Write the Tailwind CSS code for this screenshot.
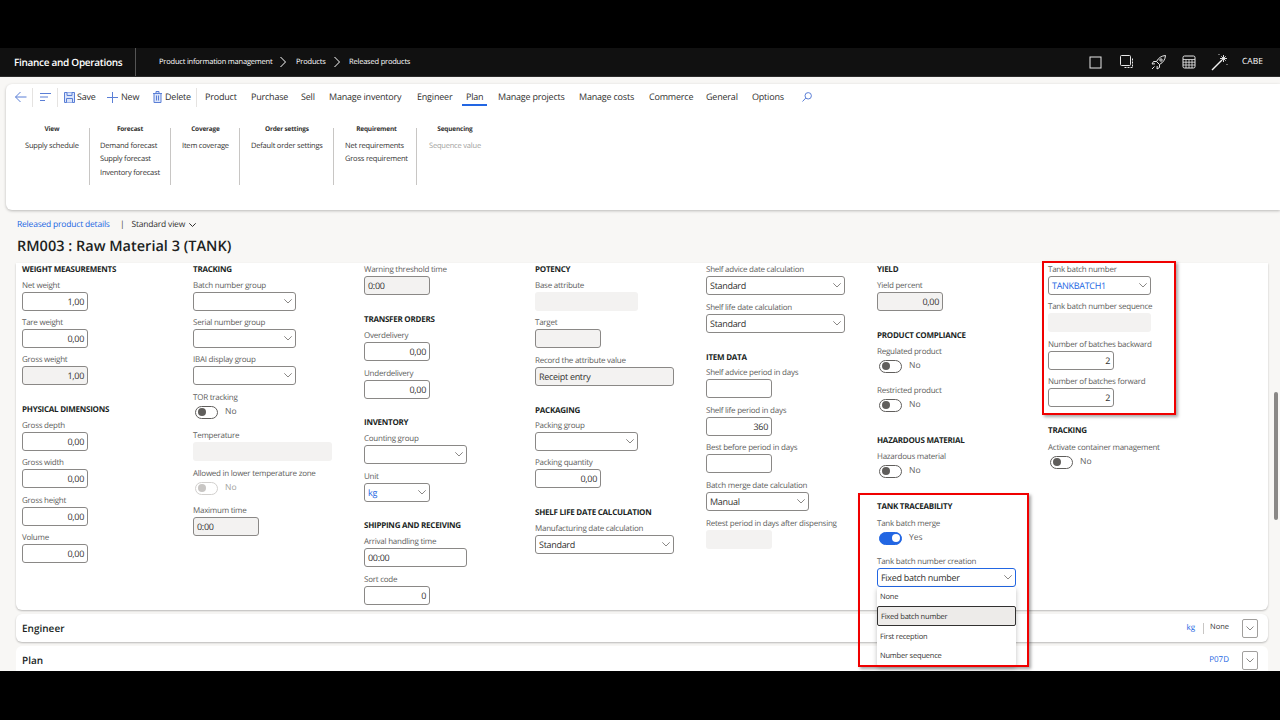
<!DOCTYPE html>
<html lang="en">
<head>
    <meta charset="UTF-8">
    <title>Released product details</title>
    <script src="https://cdn.jsdelivr.net/npm/@tailwindcss/browser@4"></script>
</head>
<body class="h-[720px] overflow-hidden bg-black font-['Open_Sans',sans-serif] [text-rendering:geometricPrecision]">
    <div class="h-[48px]"></div>
    <div class="relative h-[623px] overflow-hidden bg-[#f8f7f5]">
        <!-- top bar -->
        <header class="flex h-[29px] items-center bg-[#111111] text-white border-b border-[#2b2b2b]">
            <div class="w-[136px] h-full flex items-center pl-[14px] border-r border-[#555] text-[10px] font-semibold tracking-[-0.3px] whitespace-nowrap">Finance and Operations</div>
            <nav class="flex items-center pl-[23px] text-[7.5px] font-medium tracking-[-0.2px] whitespace-nowrap">
                <span class="w-[113px] pt-[2px]">Product information management</span>
                <svg class="mx-[8px] w-[6px] h-[12px]" viewBox="0 0 6 12" fill="none" stroke="white"><path d="M0.5 1l5 5-5 5"/></svg>
                <span class="w-[30px] ml-[2px] pt-[2px]">Products</span>
                <svg class="mx-[8px] w-[6px] h-[12px]" viewBox="0 0 6 12" fill="none" stroke="white"><path d="M0.5 1l5 5-5 5"/></svg>
                <span class="ml-[1px] pt-[2px]">Released products</span>
            </nav>
            <div class="ml-auto flex items-center pr-[17px]">
                <svg class="w-[13px] h-[13px]" viewBox="0 0 13 13" fill="none" stroke="#e8e8e8"><rect x="1" y="1" width="11" height="11"/></svg>
                <svg class="ml-[17px] w-[16px] h-[16px]" viewBox="0 0 16 16" fill="none" stroke="#e8e8e8"><rect x="1.5" y="1.5" width="10" height="10" rx="1"/><path d="M13.5 4.5v9h-9" stroke-dasharray="2 1"/></svg>
                <svg class="ml-[15px] w-[17px] h-[17px]" viewBox="0 0 17 17" fill="none" stroke="#e8e8e8"><path d="M15.5 1.5c-4 .3-7 2.300-9 6l3 3c3.700-2 5.700-5 6-9zM6.500 7.500h-3l-1.500 2.500 3-.2M9.500 10.500v3l-2.500 1.500.2-3M4.500 12.500l-2.500 2.500"/><circle cx="11" cy="6" r="1.200"/></svg>
                <svg class="ml-[15px] w-[14px] h-[14px]" viewBox="0 0 14 14" fill="none" stroke="#e8e8e8"><rect x="1" y="1" width="12" height="12" rx="1.500"/><path d="M1 4.500h12M1 7.200h12M1 10h12M4 4.500v8.500M7 4.500v8.500M10 4.500v8.500" stroke-width=".8"/></svg>
                <svg class="ml-[15px] w-[18px] h-[18px]" viewBox="0 0 18 18" fill="none" stroke="#f2f2f2"><path d="M1 17l10-10" stroke-width="1.400"/><path d="M12.500 2v7M9 5.500h7M10.300 3.300l4.400 4.400M14.700 3.300l-4.400 4.400" stroke-width=".9"/><path d="M16 11v1M8 1v1" stroke-width=".8"/></svg>
                <span class="ml-[13px] w-[21px] pt-[1px] text-[8.5px]">CABE</span>
            </div>
        </header>

        <!-- action pane -->
        <section class="mt-[7px] ml-[6px] h-[126px] bg-white rounded-l-[6px] shadow-[0_1px_3px_rgba(0,0,0,0.25)]">
            <div class="flex h-[26px] items-center text-[9px] tracking-[-0.2px] text-[#323130] whitespace-nowrap">
                <svg class="ml-[9px] w-[12px] h-[12px]" viewBox="0 0 12 12" fill="none" stroke="#5b7fd6"><path d="M11.500 6h-11M5.500 1l-5 5 5 5"/></svg>
                <span class="ml-[5px] h-[19px] border-l border-[#e5e3e1]"></span>
                <svg class="ml-[7px] w-[11px] h-[10px]" viewBox="0 0 11 10" fill="none" stroke="#5b7fd6"><path d="M0 1.500h11M0 5h8M0 8.500h5"/></svg>
                <span class="ml-[6px] h-[19px] border-l border-[#e5e3e1]"></span>
                <svg class="ml-[6px] w-[11px] h-[11px]" viewBox="0 0 11 11" fill="#dbe5fa" stroke="#5b7fd6"><path d="M.5.500h10v10H.5z"/><path d="M3 .500v3h5v-3M2.500 10.500v-4h6v4"/></svg>
                <span class="ml-[2px] w-[17px]">Save</span>
                <svg class="ml-[13px] w-[11px] h-[11px]" viewBox="0 0 11 11" fill="none" stroke="#5b7fd6"><path d="M5.500 0v11M0 5.500h11"/></svg>
                <span class="ml-[3px] w-[17px]">New</span>
                <svg class="ml-[15px] w-[9px] h-[12px]" viewBox="0 0 9 12" fill="#dbe5fa" stroke="#5b7fd6"><path d="M1 2.500h7v9H1zM0 2.500h9M3 2.500V.500h3v2M3.500 4.500v5M5.500 4.500v5"/></svg>
                <span class="ml-[3px] w-[26px]">Delete</span>
                <span class="ml-[5px] h-[19px] border-l border-[#e5e3e1]"></span>
                <span class="ml-[8px] w-[32px]">Product</span>
                <span class="ml-[14px] w-[36px]">Purchase</span>
                <span class="ml-[14px] w-[15px]">Sell</span>
                <span class="ml-[13px] w-[74px]">Manage inventory</span>
                <span class="ml-[14px] w-[36px]">Engineer</span>
                <span class="relative ml-[13px] w-[17px]">Plan<span class="absolute left-[-4px] right-[-4px] top-[14px] h-[2px] bg-[#2266e3]"></span></span>
                <span class="ml-[15px] w-[68px]">Manage projects</span>
                <span class="ml-[13px] w-[57px]">Manage costs</span>
                <span class="ml-[13px] w-[44px]">Commerce</span>
                <span class="ml-[13px] w-[32px]">General</span>
                <span class="ml-[14px] w-[32px]">Options</span>
                <svg class="ml-[18px] w-[10px] h-[10px]" viewBox="0 0 10 10" fill="none" stroke="#5b7fd6"><circle cx="6.200" cy="3.800" r="3.200"/><path d="M3.800 6L.5 9.500"/></svg>
            </div>
            <div class="flex mt-[18px] ml-[8px] h-[57px] text-[7.5px] tracking-[-0.2px] text-[#323130] whitespace-nowrap">
                <div class="w-[76px] pl-[11px] border-r border-[#c8c6c4]">
                    <div class="w-fit"><div class="h-[14px] leading-[1px] text-center font-bold text-[6.5px]">View</div><div class="h-[14px] leading-[8px]">Supply schedule</div></div>
                </div>
                <div class="w-[81px] pl-[10px] border-r border-[#c8c6c4]">
                    <div class="w-fit"><div class="h-[14px] leading-[1px] text-center font-bold text-[6.5px]">Forecast</div><div class="h-[14px] leading-[8px]">Demand forecast</div><div class="h-[14px] leading-[7px]">Supply forecast</div><div class="h-[14px] leading-[7px]">Inventory forecast</div></div>
                </div>
                <div class="w-[69px] pl-[11px] border-r border-[#c8c6c4]">
                    <div class="w-fit"><div class="h-[14px] leading-[1px] text-center font-bold text-[6.5px]">Coverage</div><div class="h-[14px] leading-[8px]">Item coverage</div></div>
                </div>
                <div class="w-[94px] pl-[11px] border-r border-[#c8c6c4]">
                    <div class="w-fit"><div class="h-[14px] leading-[1px] text-center font-bold text-[6.5px]">Order settings</div><div class="h-[14px] leading-[8px]">Default order settings</div></div>
                </div>
                <div class="w-[83px] pl-[11px] border-r border-[#c8c6c4]">
                    <div class="w-fit"><div class="h-[14px] leading-[1px] text-center font-bold text-[6.5px]">Requirement</div><div class="h-[14px] leading-[8px]">Net requirements</div><div class="h-[14px] leading-[7px]">Gross requirement</div></div>
                </div>
                <div class="w-[74px] pl-[12px]">
                    <div class="w-fit"><div class="h-[14px] leading-[1px] text-center font-bold text-[6.5px]">Sequencing</div><div class="h-[14px] leading-[8px] text-[#a19f9d]">Sequence value</div></div>
                </div>
            </div>
        </section>

        <!-- page title -->
        <div class="h-[53px] pl-[17px] pt-[9px]">
            <div class="flex items-center h-[12px] text-[8.5px] tracking-[-0.2px] text-[#323130] whitespace-nowrap">
                <span class="w-[95px] text-[#2266e3]">Released product details</span>
                <span class="ml-[8px] mr-[7px]">|</span>
                <span class="w-[54px]">Standard view</span>
                <svg class="ml-[4px] w-[7px] h-[4px]" viewBox="0 0 7 4" fill="none" stroke="#323130"><path d="M.3.3L3.500 3.500 6.700.3"/></svg>
            </div>
            <h1 class="mt-[6px] text-[14.500px] leading-[20px] font-semibold text-[#201f1e] whitespace-nowrap">RM003 : Raw Material 3 (TANK)</h1>
        </div>

        <!-- general fasttab, the top is scrolled away -->
        <section class="ml-[16px] w-[1252px] h-[347px] overflow-hidden bg-white rounded-b-[6px] shadow-[0_1px_2px_rgba(0,0,0,0.25)]">
            <div id="fields" class="grid grid-cols-[repeat(7,171px)] -mt-px pl-[6px]"></div>
        </section>

        <section class="mt-[4px] ml-[16px] w-[1252px] h-[28px] flex items-center pl-[6px] bg-white rounded-[6px] shadow-[0_1px_2px_rgba(0,0,0,0.25)]">
            <span class="text-[10px] font-semibold text-[#201f1e]">Engineer</span>
            <span class="ml-auto text-[8px] text-[#2266e3]">kg</span>
            <span class="ml-[8px] h-[11px] border-l border-[#c8c6c4]"></span>
            <span class="ml-[6px] text-[7.5px] text-[#323130]">None</span>
            <span class="ml-[13px] mr-[10px] w-[16px] h-[19px] flex items-center justify-center border border-[#a19f9d] rounded-[2px]"><svg class="w-[8px] h-[5px]" viewBox="0 0 8 5" fill="none" stroke="#8a8886"><path d="M.5.5L4 4 7.500.5"/></svg></span>
        </section>
        <section class="mt-[4px] ml-[16px] w-[1252px] h-[28px] flex items-center pl-[6px] bg-white rounded-t-[6px]">
            <span class="text-[10px] font-semibold text-[#201f1e]">Plan</span>
            <span class="ml-auto text-[8px] text-[#2266e3]">P07D</span>
            <span class="ml-[13px] mr-[10px] w-[16px] h-[19px] flex items-center justify-center border border-[#a19f9d] rounded-[2px]"><svg class="w-[8px] h-[5px]" viewBox="0 0 8 5" fill="none" stroke="#8a8886"><path d="M.5.5L4 4 7.500.5"/></svg></span>
        </section>

        <!-- scrollbar -->
        <div class="absolute left-[1274px] top-[344px] w-[4px] h-[128px] rounded-[2px] bg-[#8a8886]"></div>

        <!-- open dropdown -->
        <div class="absolute left-[877px] top-[539px] w-[139px] h-[79px] bg-white rounded-[2px] shadow-[0_2px_5px_rgba(0,0,0,0.25)] text-[7.500px] tracking-[-0.2px] text-[#323130]">
            <div class="h-[19px] pl-[3px] leading-[21px]">None</div>
            <div class="h-[20px] pl-[3px] leading-[20px] bg-[#edebe9] border border-[#323130] rounded-[2px]">Fixed batch number</div>
            <div class="h-[20px] pl-[3px] leading-[22px]">First reception</div>
            <div class="h-[19px] pl-[3px] leading-[21px]">Number sequence</div>
        </div>

        <!-- red callouts -->
        <div class="absolute left-[858px] top-[445px] w-[171px] h-[174px] border-2 border-[#f00000] shadow-[2px_2px_3px_rgba(0,0,0,0.35)]"></div>
        <div class="absolute left-[1042px] top-[213px] w-[134px] h-[154px] border-2 border-[#f00000] shadow-[2px_2px_3px_rgba(0,0,0,0.35)]"></div>
    </div>
    <div class="h-[49px]"></div>

    <script>
        const chevron = '<svg class="ml-auto shrink-0 w-[8px] h-[5px]" viewBox="0 0 8 5" fill="none" stroke="#8a8886"><path d="M.3.3L4 4 7.700.3"/></svg>';

        function head(text, mt) {
            return `<div class="h-[14px] leading-[16px] text-[8px] font-bold tracking-[-0.25px] text-[#201f1e] whitespace-nowrap ${mt}">${text}</div>`;
        }
        function label(text) {
            return `<div class="h-[14px] leading-[16px] text-[8px] tracking-[-0.25px] text-[#605e5c] whitespace-nowrap">${text}</div>`;
        }
        function num(text, value, mt) {
            return `<div class="${mt}">${label(text)}<div class="w-[66px] h-[19px] flex items-center justify-end pr-[3px] bg-white border border-[#8a8886] rounded-[3px] text-[9px] tracking-[-0.3px] text-[#323130]">${value}</div></div>`;
        }
        function grayNum(text, value, mt) {
            return `<div class="${mt}">${label(text)}<div class="w-[66px] h-[19px] flex items-center justify-end pr-[3px] bg-[#f3f2f1] border border-[#8a8886] rounded-[3px] text-[9px] tracking-[-0.3px] text-[#323130]">${value}</div></div>`;
        }
        function grayText(text, value, width, mt) {
            return `<div class="${mt}">${label(text)}<div class="${width} h-[19px] flex items-center pl-[3px] bg-[#f3f2f1] border border-[#8a8886] rounded-[3px] text-[9px] tracking-[-0.3px] text-[#323130]">${value}</div></div>`;
        }
        function blank(text, width, mt) {
            return `<div class="${mt}">${label(text)}<div class="${width} h-[19px] bg-[#f3f2f1] rounded-[3px]"></div></div>`;
        }
        function textBox(text, value, mt) {
            return `<div class="${mt}">${label(text)}<div class="w-[103px] h-[19px] flex items-center pl-[3px] bg-white border border-[#8a8886] rounded-[3px] text-[9px] tracking-[-0.3px] text-[#323130]">${value}</div></div>`;
        }
        function select(text, value, width, mt, link) {
            const color = link ? 'text-[#2266e3]' : 'text-[#323130]';
            return `<div class="${mt}">${label(text)}<div class="${width} h-[19px] flex items-center pl-[3px] pr-[3px] bg-white border border-[#8a8886] rounded-[3px] text-[9px] tracking-[-0.3px] ${color}">${value}${chevron}</div></div>`;
        }
        function toggle(text, mt, state) {
            let track = 'border-[#605e5c] bg-white';
            let knob = 'bg-[#605e5c]';
            let value = 'No';
            let valueColor = 'text-[#605e5c]';
            let knobPlace = 'ml-[2px]';
            if (state === 'off') {
                track = 'border-[#d2d0ce] bg-white';
                knob = 'bg-[#c8c6c4]';
                valueColor = 'text-[#a19f9d]';
            }
            if (state === 'on') {
                track = 'border-[#2266e3] bg-[#2266e3]';
                knob = 'bg-white';
                value = 'Yes';
                knobPlace = 'ml-[12px]';
            }
            return `<div class="${mt}">${label(text)}<div class="flex items-center h-[14px] mt-px pl-[2px]"><span class="w-[23px] h-[13px] flex items-center border rounded-full ${track}"><span class="w-[8px] h-[8px] rounded-full ${knob} ${knobPlace}"></span></span><span class="ml-[7px] text-[8.5px] ${valueColor}">${value}</span></div></div>`;
        }

        const columns = [
            [
                head('WEIGHT MEASUREMENTS', ''),
                num('Net weight', '1,00', 'mt-[2px]'),
                num('Tare weight', '0,00', 'mt-[4px]'),
                grayNum('Gross weight', '1,00', 'mt-[4px]'),
                head('PHYSICAL DIMENSIONS', 'mt-[17px]'),
                num('Gross depth', '0,00', 'mt-[2px]'),
                num('Gross width', '0,00', 'mt-[4px]'),
                num('Gross height', '0,00', 'mt-[5px]'),
                num('Volume', '0,00', 'mt-[4px]')
            ],
            [
                head('TRACKING', ''),
                select('Batch number group', '', 'w-[103px]', 'mt-[2px]'),
                select('Serial number group', '', 'w-[103px]', 'mt-[4px]'),
                select('IBAI display group', '', 'w-[103px]', 'mt-[4px]'),
                toggle('TOR tracking', 'mt-[5px]'),
                blank('Temperature', 'w-[139px]', 'mt-[9px]'),
                toggle('Allowed in lower temperature zone', 'mt-[5px]', 'off'),
                grayText('Maximum time', '0:00', 'w-[66px]', 'mt-[8px]')
            ],
            [
                grayText('Warning threshold time', '0:00', 'w-[66px]', ''),
                head('TRANSFER ORDERS', 'mt-[17px]'),
                num('Overdelivery', '0,00', 'mt-[2px]'),
                num('Underdelivery', '0,00', 'mt-[5px]'),
                head('INVENTORY', 'mt-[16px]'),
                select('Counting group', '', 'w-[103px]', 'mt-[2px]'),
                select('Unit', 'kg', 'w-[66px]', 'mt-[5px]', true),
                head('SHIPPING AND RECEIVING', 'mt-[16px]'),
                textBox('Arrival handling time', '00:00', 'mt-[2px]'),
                num('Sort code', '0', 'mt-[5px]')
            ],
            [
                head('POTENCY', ''),
                blank('Base attribute', 'w-[103px]', 'mt-[2px]'),
                grayText('Target', '', 'w-[66px]', 'mt-[4px]'),
                grayText('Record the attribute value', 'Receipt entry', 'w-[139px]', 'mt-[5px]'),
                head('PACKAGING', 'mt-[17px]'),
                select('Packing group', '', 'w-[103px]', 'mt-[1px]'),
                num('Packing quantity', '0,00', 'mt-[4px]'),
                head('SHELF LIFE DATE CALCULATION', 'mt-[17px]'),
                select('Manufacturing date calculation', 'Standard', 'w-[139px]', 'mt-[2px]')
            ],
            [
                select('Shelf advice date calculation', 'Standard', 'w-[139px]', ''),
                select('Shelf life date calculation', 'Standard', 'w-[139px]', 'mt-[5px]'),
                head('ITEM DATA', 'mt-[17px]'),
                num('Shelf advice period in days', '', 'mt-[1px]'),
                num('Shelf life period in days', '360', 'mt-[5px]'),
                num('Best before period in days', '', 'mt-[4px]'),
                select('Batch merge date calculation', 'Manual', 'w-[103px]', 'mt-[5px]'),
                blank('Retest period in days after dispensing', 'w-[66px]', 'mt-[5px]')
            ],
            [
                head('YIELD', ''),
                grayNum('Yield percent', '0,00', 'mt-[2px]'),
                head('PRODUCT COMPLIANCE', 'mt-[17px]'),
                toggle('Regulated product', 'mt-[2px]'),
                toggle('Restricted product', 'mt-[10px]'),
                head('HAZARDOUS MATERIAL', 'mt-[21px]'),
                toggle('Hazardous material', 'mt-[2px]'),
                head('TANK TRACEABILITY', 'mt-[21px]'),
                toggle('Tank batch merge', 'mt-[3px]', 'on'),
                `<div class="mt-[9px]">${label('Tank batch number creation')}<div class="w-[139px] h-[19px] flex items-center pl-[3px] pr-[3px] bg-white border border-[#2266e3] rounded-[3px] text-[9px] tracking-[-0.3px] text-[#323130]">Fixed batch number${chevron}</div></div>`
            ],
            [
                select('Tank batch number', 'TANKBATCH1', 'w-[103px]', '', true),
                blank('Tank batch number sequence', 'w-[103px]', 'mt-[4px]'),
                num('Number of batches backward', '2', 'mt-[5px]'),
                num('Number of batches forward', '2', 'mt-[4px]'),
                head('TRACKING', 'mt-[16px]'),
                toggle('Activate container management', 'mt-[3px]')
            ]
        ];

        document.getElementById('fields').innerHTML = columns
            .map(items => `<div>${items.join('')}</div>`)
            .join('');
    </script>
</body>
</html>
